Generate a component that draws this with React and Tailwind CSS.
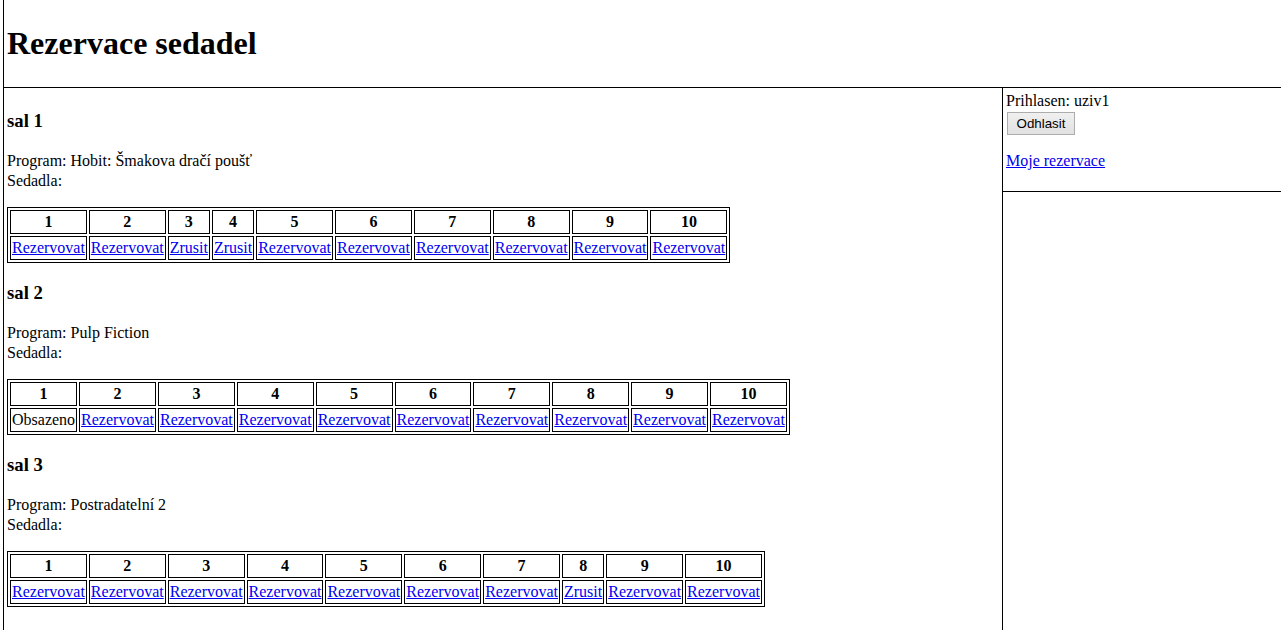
import React from 'react';

const saly = [
  {
    name: 'sal 1',
    program: 'Hobit: Šmakova dračí poušť',
    seats: ['r', 'r', 'z', 'z', 'r', 'r', 'r', 'r', 'r', 'r'],
  },
  {
    name: 'sal 2',
    program: 'Pulp Fiction',
    seats: ['o', 'r', 'r', 'r', 'r', 'r', 'r', 'r', 'r', 'r'],
  },
  {
    name: 'sal 3',
    program: 'Postradatelní 2',
    seats: ['r', 'r', 'r', 'r', 'r', 'r', 'r', 'z', 'r', 'r'],
  },
];

const SeatCell = ({ state }) => {
  if (state === 'o') return <span>Obsazeno</span>;
  return (
    <a href="#" className="text-[#0000ee] underline">
      {state === 'z' ? 'Zrusit' : 'Rezervovat'}
    </a>
  );
};

const Sal = ({ sal }) => (
  <div>
    <h3 className="text-[18.72px] leading-[22px] font-bold mt-[18.72px] mb-[19.72px]">{sal.name}</h3>
    <p>
      Program: {sal.program}
      <br />
      Sedadla:
    </p>
    <table className="mt-[15.6px] border border-black border-separate border-spacing-[2px]">
      <tbody>
        <tr>
          {sal.seats.map((_, i) => (
            <th key={i} className="border border-black px-px leading-[20px] py-px font-bold text-center">
              {i + 1}
            </th>
          ))}
        </tr>
        <tr>
          {sal.seats.map((s, i) => (
            <td key={i} className="border border-black px-px leading-[20px] py-px text-left">
              <SeatCell state={s} />
            </td>
          ))}
        </tr>
      </tbody>
    </table>
  </div>
);

const App = () => {
  return (
    <div className="ml-[3px] min-h-screen border-l border-black bg-white text-black text-[16px] leading-[20px] font-['Liberation_Serif','Times_New_Roman',serif]">
      <div className="border-b border-black px-[3px] pt-[4px] pb-[3px]">
        <h1 className="text-[32px] leading-[normal] font-bold my-[21.44px]">Rezervace sedadel</h1>
      </div>

      <div className="flex">
        <div className="w-[999px] shrink-0 border-r border-black px-[3px] pt-[3px] pb-4 min-h-[542px]">
          {saly.map((sal) => (
            <Sal key={sal.name} sal={sal} />
          ))}
        </div>

        <div className="flex-1">
          <div className="h-[104px] border-b border-black px-[3px] pt-[3px]">
            <div>Prihlasen: uziv1</div>
            <button className="block mt-px ml-px h-[23px] w-[68px] border border-[#adadad] bg-linear-to-b from-[#f0f0f0] to-[#e1e1e1] text-[13.33px] leading-[normal] font-['Liberation_Sans',Arial,sans-serif] text-black">
              Odhlasit
            </button>
            <p className="mt-4">
              <a href="#" className="text-[#0000ee] underline">Moje rezervace</a>
            </p>
          </div>
        </div>
      </div>
    </div>
  );
};

export default App;
